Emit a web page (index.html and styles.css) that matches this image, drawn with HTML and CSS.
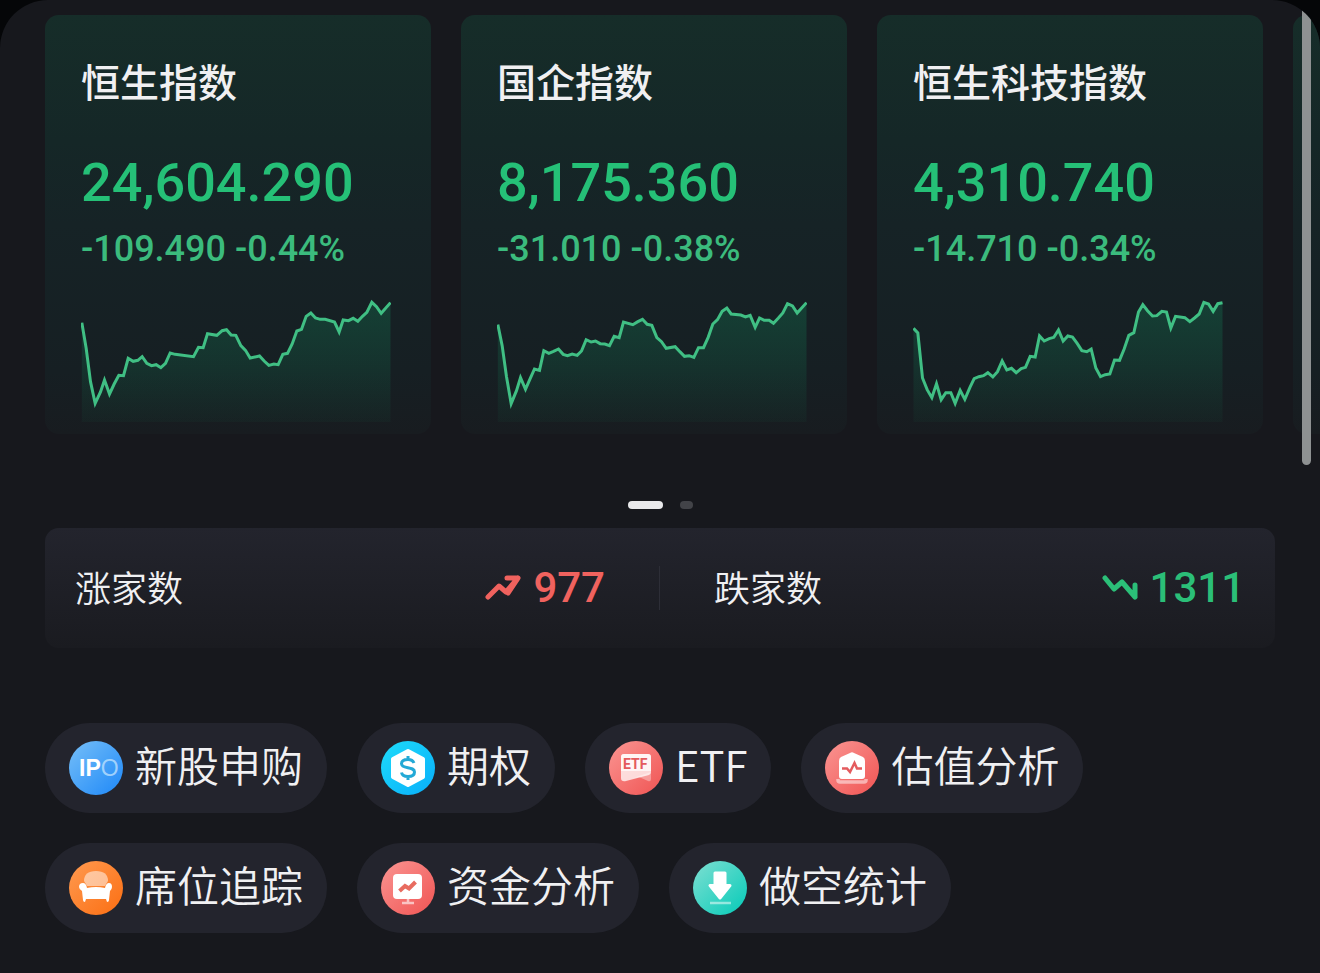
FILE: index.html
```html
<!DOCTYPE html>
<html lang="zh-CN">
<head>
<meta charset="utf-8">
<meta name="viewport" content="width=device-width, initial-scale=1">
<title>港股行情</title>
<link rel="stylesheet" href="styles.css">
</head>
<body>
<svg class="defs" aria-hidden="true">
  <defs>
    <linearGradient id="area" x1="0" y1="60" x2="0" y2="426" gradientUnits="userSpaceOnUse"><stop offset="0" stop-color="#10b070" stop-opacity=".22"/><stop offset=".5" stop-color="#10b070" stop-opacity=".14"/><stop offset="1" stop-color="#10b070" stop-opacity=".04"/></linearGradient>
    <linearGradient id="blue" x1="0" y1="0" x2="1" y2="1"><stop offset="0" stop-color="#76bff8"/><stop offset="1" stop-color="#1e88f8"/></linearGradient>
    <linearGradient id="cyan" x1="0" y1="0" x2="1" y2="1"><stop offset="0" stop-color="#1edcfa"/><stop offset="1" stop-color="#08aefa"/></linearGradient>
    <linearGradient id="red" x1="0" y1="0" x2="1" y2="1"><stop offset="0" stop-color="#fa9592"/><stop offset="1" stop-color="#f05453"/></linearGradient>
    <linearGradient id="orange" x1="0" y1="0" x2="1" y2="1"><stop offset="0" stop-color="#ff9a50"/><stop offset="1" stop-color="#fb6e12"/></linearGradient>
    <linearGradient id="teal" x1="0" y1="0" x2="1" y2="1"><stop offset="0" stop-color="#7fdfd2"/><stop offset="1" stop-color="#04cbb8"/></linearGradient>
  </defs>
</svg>
<main class="screen">
  <section class="indices">
    <article class="card">
      <h2 class="card-title">恒生指数</h2>
      <p class="price">24,604.290</p>
      <p class="change">-109.490 -0.44%</p>
      <svg class="chart" viewBox="64 36 927 390" aria-hidden="true">
        <path class="area" d="M65 128 78 205 91 305 105 370 121 336 133 300 148 342 162 312 176 286 190 287 204 235 219 244 233 241 246 230 260 250 274 257 288 254 302 263 316 250 330 219 345 223 400 230 415 202 429 203 442 161 470 166 486 152 499 149 513 165 527 166 542 197 556 211 570 234 598 228 612 243 626 256 641 252 654 254 668 223 682 220 696 192 710 153 724 148 738 109 752 99 766 114 780 118 795 118 823 126 837 156 849 120 865 122 879 115 893 124 907 109 920 97 935 67 949 80 963 100 991 68V426H65Z"/>
        <path class="line" d="M65 128 78 205 91 305 105 370 121 336 133 300 148 342 162 312 176 286 190 287 204 235 219 244 233 241 246 230 260 250 274 257 288 254 302 263 316 250 330 219 345 223 400 230 415 202 429 203 442 161 470 166 486 152 499 149 513 165 527 166 542 197 556 211 570 234 598 228 612 243 626 256 641 252 654 254 668 223 682 220 696 192 710 153 724 148 738 109 752 99 766 114 780 118 795 118 823 126 837 156 849 120 865 122 879 115 893 124 907 109 920 97 935 67 949 80 963 100 991 68"/>
      </svg>
    </article>
    <article class="card">
      <h2 class="card-title">国企指数</h2>
      <p class="price">8,175.360</p>
      <p class="change">-31.010 -0.38%</p>
      <svg class="chart" viewBox="52 36 927 390" aria-hidden="true">
        <path class="area" d="M53 134 66 197 79 290 93 371 109 332 121 293 136 328 150 296 163 267 178 271 191 212 206 220 220 214 235 207 249 223 262 227 276 222 291 226 304 213 318 179 333 186 346 183 360 191 374 192 388 197 402 169 417 173 430 126 458 134 473 125 487 118 501 133 515 136 530 173 544 185 558 205 585 200 599 215 613 229 627 227 641 232 655 203 670 203 684 172 698 132 712 119 726 94 740 84 753 102 782 105 796 111 810 106 825 142 838 114 852 121 867 121 880 130 894 115 908 99 922 71 937 78 951 99 979 68V426H53Z"/>
        <path class="line" d="M53 134 66 197 79 290 93 371 109 332 121 293 136 328 150 296 163 267 178 271 191 212 206 220 220 214 235 207 249 223 262 227 276 222 291 226 304 213 318 179 333 186 346 183 360 191 374 192 388 197 402 169 417 173 430 126 458 134 473 125 487 118 501 133 515 136 530 173 544 185 558 205 585 200 599 215 613 229 627 227 641 232 655 203 670 203 684 172 698 132 712 119 726 94 740 84 753 102 782 105 796 111 810 106 825 142 838 114 852 121 867 121 880 130 894 115 908 99 922 71 937 78 951 99 979 68"/>
      </svg>
    </article>
    <article class="card">
      <h2 class="card-title">恒生科技指数</h2>
      <p class="price">4,310.740</p>
      <p class="change">-14.710 -0.34%</p>
      <svg class="chart" viewBox="70 36 927 390" aria-hidden="true">
        <path class="area" d="M70 145 83 159 97 294 111 329 125 353 139 311 153 359 167 338 182 338 195 370 210 331 224 358 239 323 252 296 266 290 280 287 293 278 308 291 322 275 336 243 350 270 364 265 378 278 393 266 406 262 420 229 435 231 448 168 462 183 477 176 491 172 505 150 519 183 533 168 547 171 561 190 575 212 590 215 603 207 617 264 631 290 645 284 659 282 673 240 688 241 702 207 716 166 731 158 745 96 758 74 772 92 787 108 800 107 815 94 829 96 842 144 856 109 884 113 899 125 913 114 927 102 941 67 955 72 969 94 983 71 997 68V426H70Z"/>
        <path class="line" d="M70 145 83 159 97 294 111 329 125 353 139 311 153 359 167 338 182 338 195 370 210 331 224 358 239 323 252 296 266 290 280 287 293 278 308 291 322 275 336 243 350 270 364 265 378 278 393 266 406 262 420 229 435 231 448 168 462 183 477 176 491 172 505 150 519 183 533 168 547 171 561 190 575 212 590 215 603 207 617 264 631 290 645 284 659 282 673 240 688 241 702 207 716 166 731 158 745 96 758 74 772 92 787 108 800 107 815 94 829 96 842 144 856 109 884 113 899 125 913 114 927 102 941 67 955 72 969 94 983 71 997 68"/>
      </svg>
    </article>
    <article class="card"></article>
  </section>

  <div class="pager"><span class="dot dot-on"></span><span class="dot"></span></div>

  <section class="breadth">
    <div class="breadth-item up">
      <span class="breadth-label">涨家数</span>
      <svg class="trend" viewBox="0 0 36 28" aria-hidden="true"><path d="M3 23 14 12 21 18 33 4H22M33 4 23 19"/></svg>
      <span class="count">977</span>
    </div>
    <div class="breadth-item down">
      <span class="breadth-label">跌家数</span>
      <svg class="trend" viewBox="0 0 36 28" aria-hidden="true"><path d="M3 4 12 15 20 8 33 23V11M33 23 22 10"/></svg>
      <span class="count">1311</span>
    </div>
  </section>

  <nav class="chips">
    <a class="chip" href="#ipo">
      <svg class="icon" viewBox="0 0 54 54" aria-hidden="true"><circle cx="27" cy="27" r="27" fill="url(#blue)"/><text class="ipo-text" x="10" y="35">IP<tspan class="ipo-o">O</tspan></text></svg>
      <span class="chip-label">新股申购</span></a>
    <a class="chip" href="#options">
      <svg class="icon" viewBox="0 0 54 54" aria-hidden="true"><circle cx="27" cy="27" r="27" fill="url(#cyan)"/><path d="M27 10 42 18V36L27 44 12 36V18Z" fill="#fff" stroke="#fff" stroke-width="4" stroke-linejoin="round"/><path d="M33 22C32 19.500 30 18.500 27 18.500 23 18.500 20.500 20.200 20.500 22.800 20.500 28.500 33.500 25 33.500 31 33.500 33.800 31 35.500 27 35.500 23.500 35.500 21 34 20.500 31.500M27 15V19M27 35V39" fill="none" stroke="#23a9d6" stroke-width="3"/></svg>
      <span class="chip-label">期权</span></a>
    <a class="chip" href="#etf">
      <svg class="icon" viewBox="0 0 54 54" aria-hidden="true"><circle cx="27" cy="27" r="27" fill="url(#red)"/><path d="M24 37 42 31V38Q42 41 39 40L30 36Z" fill="#fff" opacity=".35"/><path d="M15 13H39Q42 13 42 16V31Q42 33 40 34L17 40Q12 41 12 37V16Q12 13 15 13Z" fill="#fff" opacity=".75"/><path d="M15 13H39Q42 13 42 16V30H12V16Q12 13 15 13Z" fill="#fff" opacity=".7"/><text class="etf-text" x="14" y="28">ETF</text></svg>
      <span class="chip-label">ETF</span></a>
    <a class="chip" href="#valuation">
      <svg class="icon" viewBox="0 0 54 54" aria-hidden="true"><circle cx="27" cy="27" r="27" fill="url(#red)"/><path d="M13 38V39Q13 41 15 41H39Q41 41 41 39V38" fill="none" stroke="#fff" stroke-width="3.500" opacity=".5"/><path d="M25 12Q27 10.500 29 12L38 16Q40 17 40 20V35Q40 38 37 38H17Q14 38 14 35V20Q14 17 16 16Z" fill="#fff"/><path d="M17 27.500H22L25 31 29.500 22 32 27.500H37" fill="none" stroke="#e45b5e" stroke-width="2.500"/></svg>
      <span class="chip-label">估值分析</span></a>
    <a class="chip" href="#seats">
      <svg class="icon" viewBox="0 0 54 54" aria-hidden="true"><circle cx="27" cy="27" r="27" fill="url(#orange)"/><path d="M15 20Q15 10 27 10 39 10 39 20L36 25H18Z" fill="#fff" opacity=".5"/><path d="M14 22Q17 22 18 27 27 25 36 27 37 22 40 22 43 22 43 26 43 28 41 30L40 39Q40 41 38 41L37 38H17L16 41Q14 41 14 39L13 30Q10 28 10 26 10 22 14 22Z" fill="#fff"/></svg>
      <span class="chip-label">席位追踪</span></a>
    <a class="chip" href="#funds">
      <svg class="icon" viewBox="0 0 54 54" aria-hidden="true"><circle cx="27" cy="27" r="27" fill="url(#red)"/><path d="M27 37V42M21 42H33" stroke="#fff" stroke-width="2.500" opacity=".6"/><rect x="12" y="13" width="29" height="25" rx="4" fill="#fff"/><path d="M18.500 30 24 25 28 27.500 34.500 21" fill="none" stroke="#e86b5f" stroke-width="4"/></svg>
      <span class="chip-label">资金分析</span></a>
    <a class="chip" href="#short">
      <svg class="icon" viewBox="0 0 54 54" aria-hidden="true"><circle cx="27" cy="27" r="27" fill="url(#teal)"/><path d="M22 12H32V24.500H37L27 37 17 24.500H22Z" fill="#fff" stroke="#fff" stroke-width="3" stroke-linejoin="round"/><path d="M17 42H38" stroke="#fff" stroke-width="2.500" opacity=".5"/></svg>
      <span class="chip-label">做空统计</span></a>
  </nav>
  <div class="scroll-thumb"></div>
</main>
</body>
</html>
```
FILE: styles.css
```css
* {
  box-sizing: border-box;
}

body {
  margin: 0;
  background: #050608;
  color: #f0f0f2;
  font-family: Roboto, "Noto Sans CJK SC", sans-serif;
}

h2,
p {
  margin: 0;
}

.defs {
  position: absolute;
  width: 0;
  height: 0;
}

.screen {
  position: relative;
  min-height: 100vh;
  padding: 15px 45px 40px;
  overflow: hidden;
  background: #17181d;
  border-radius: 48px 48px 0 0;
}

.indices {
  display: flex;
  gap: 30px;
  margin-right: -45px;
  overflow: hidden;
}

.card {
  flex: none;
  width: 386px;
  padding: 41px 36px 12px;
  border-radius: 14px;
  background: linear-gradient(#162d29 0, #152727 30%, #162326 50%, #161f23 85%, #181c20 100%);
}

.card-title {
  font-family: "Noto Sans CJK SC", sans-serif;
  font-size: 39px;
  font-weight: 500;
  line-height: 48px;
}

.price {
  margin-top: 47px;
  color: #25c077;
  font-size: 54px;
  font-weight: 500;
  line-height: 64px;
}

.change {
  margin-top: 12px;
  color: #3bbb7d;
  font-size: 36px;
  font-weight: 500;
  line-height: 44px;
  white-space: nowrap;
}

.chart {
  display: block;
  width: 310px;
  height: 130px;
  margin-top: 21px;
}

.area {
  fill: url(#area);
}

.line {
  fill: none;
  stroke: #40bf84;
  stroke-width: 9;
}

.pager {
  display: flex;
  justify-content: center;
  gap: 17px;
  margin-top: 67px;
}

.dot {
  width: 13px;
  height: 8px;
  border-radius: 4px;
  background: #424348;
}

.dot-on {
  width: 35px;
  background: #e9e9eb;
}

.breadth {
  display: grid;
  grid-template-columns: 1fr 1fr;
  margin-top: 19px;
  padding: 38px 30px;
  border-radius: 14px;
  background: linear-gradient(#23242d, #1a1b20);
}

.breadth-item {
  display: flex;
  align-items: center;
  line-height: 44px;
}

.up {
  padding-right: 54px;
  border-right: 1px solid #2d2e37;
  color: #f0625e;
}

.down {
  padding-left: 54px;
  color: #2bbf78;
}

.breadth-label {
  flex: 1;
  padding-bottom: 4px;
  color: #f0f0f2;
  font-family: "Noto Sans CJK SC", sans-serif;
  font-size: 36px;
  font-weight: 350;
  line-height: 40px;
}

.trend {
  width: 36px;
  height: 28px;
  margin-right: 12px;
  fill: none;
  stroke: currentColor;
  stroke-width: 5;
  stroke-linecap: round;
  stroke-linejoin: round;
}

.count {
  font-size: 42px;
  font-weight: 500;
}

.chips {
  display: flex;
  flex-wrap: wrap;
  gap: 30px;
  margin-top: 75px;
}

.chip {
  display: flex;
  align-items: center;
  gap: 12px;
  height: 90px;
  padding: 0 24px;
  border-radius: 45px;
  background: #23242d;
  color: #f0f0f2;
  font-family: "Noto Sans CJK SC", sans-serif;
  font-size: 42px;
  font-weight: 350;
  line-height: 60px;
  text-decoration: none;
}

.chip-label {
  padding-bottom: 8px;
}

.icon {
  width: 54px;
  height: 54px;
}

.ipo-text {
  fill: #fff;
  font: 700 23px "Liberation Sans", sans-serif;
}

.ipo-o {
  fill: #b9dffd;
  font-weight: 400;
  opacity: 0.8;
}

.etf-text {
  fill: #e45b5e;
  font: 700 14px Roboto, sans-serif;
}

.scroll-thumb {
  position: absolute;
  top: 6px;
  right: 9px;
  width: 9px;
  height: 459px;
  border-radius: 5px;
  background: #8e9192;
}
```
